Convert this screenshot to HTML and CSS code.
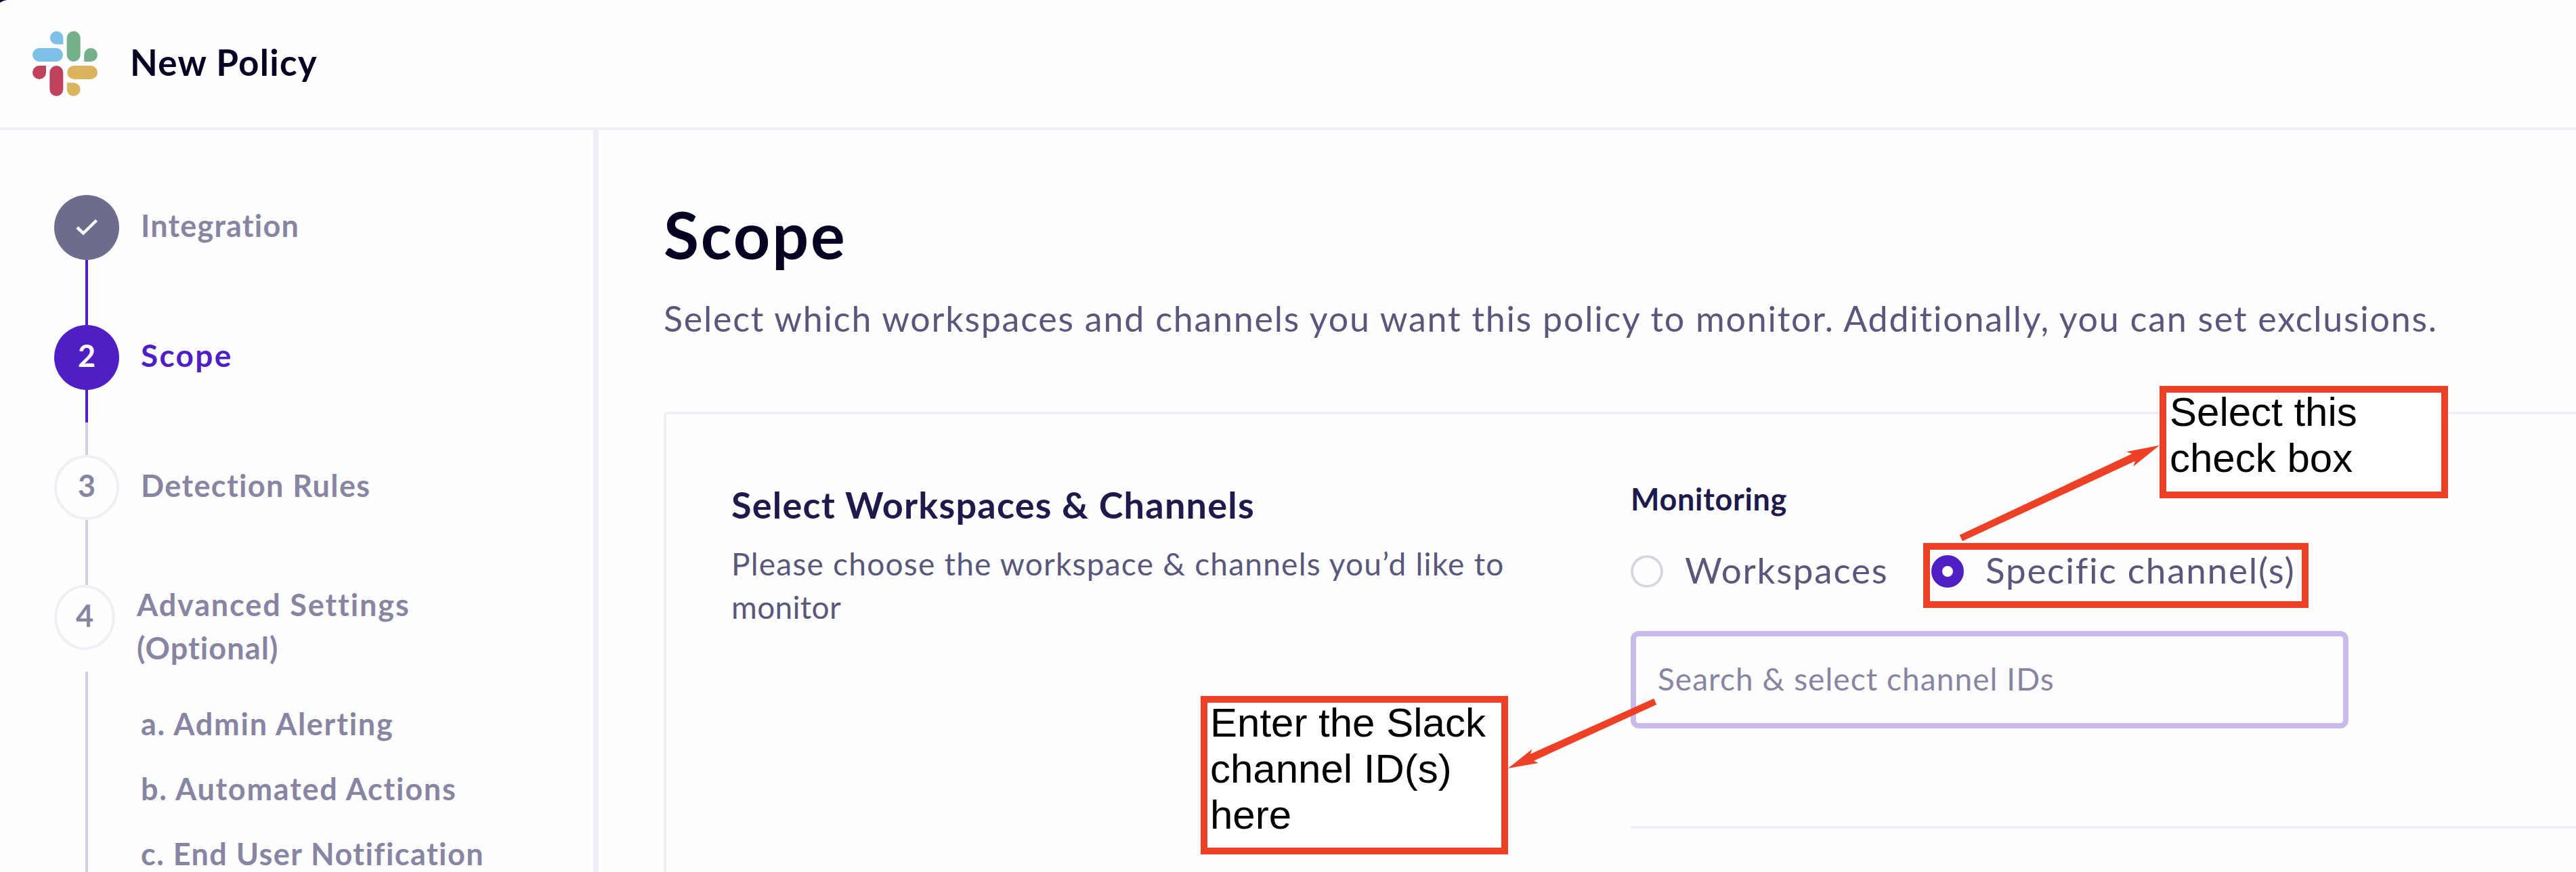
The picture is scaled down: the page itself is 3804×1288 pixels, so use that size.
FILE: index.html
```html
<!DOCTYPE html>
<html lang="en">
<head>
<meta charset="utf-8">
<title>New Policy</title>
<link rel="stylesheet" href="styles.css">
</head>
<body>
<div class="page">
  <header class="header">
    <svg class="logo" viewBox="0 0 96 96" aria-hidden="true">
      <g fill="#7cc0e8"><rect x="0" y="25" width="45" height="20" rx="10"/><path d="M45.3 19.4H35A9.7 9.7 0 1 1 45.3 9.7Z"/></g>
      <g fill="#73b087"><rect x="50.7" y="0" width="20" height="45" rx="10"/><path d="M76.2 45V35A9.9 10 0 1 1 86.1 45Z"/></g>
      <g fill="#dbb45e"><rect x="51.2" y="51" width="44.8" height="20" rx="10"/><path d="M50.8 76.2H60.8A9.9 9.9 0 1 1 50.8 86.2Z"/></g>
      <g fill="#bf435d"><rect x="25.3" y="51" width="20" height="45" rx="10"/><path d="M20 51V61A10 10 0 1 1 10 51Z"/></g>
    </svg>
    <div class="title">New Policy</div>
  </header>
  <div class="body">
    <nav class="sidebar">
      <div class="step">
        <div class="circle done"><svg viewBox="0 0 96 96"><path d="M34 48L43 56.5L62.5 37.5" fill="none" stroke="#fff" stroke-width="4.5"/></svg></div>
        <div class="label t-integration">Integration</div>
      </div>
      <div class="line active"></div>
      <div class="step">
        <div class="circle current"><span class="num">2</span></div>
        <div class="label t-scope">Scope</div>
      </div>
      <div class="line half"></div>
      <div class="step">
        <div class="circle"><span class="num">3</span></div>
        <div class="label t-rules">Detection Rules</div>
      </div>
      <div class="line"></div>
      <div class="step tall">
        <div class="circle narrow"><span class="num">4</span></div>
        <div class="label two"><span class="row t-adv">Advanced Settings</span><span class="row t-opt">(Optional)</span></div>
      </div>
      <div class="subs">
        <div class="line full"></div>
        <div class="sublist">
          <div class="sub">a. Admin Alerting</div>
          <div class="sub">b. Automated Actions</div>
          <div class="sub t-end">c. End User Notification</div>
        </div>
      </div>
    </nav>
    <main class="main">
      <h1 class="heading">Scope</h1>
      <p class="desc">Select which workspaces and channels you want this policy to monitor. Additionally, you can set exclusions.</p>
      <section class="card">
        <div class="intro">
          <h2 class="subhead">Select Workspaces &amp; Channels</h2>
          <p class="para">Please choose the workspace &amp; channels you’d like to <span class="t-mon">monitor</span></p>
        </div>
        <div class="form">
          <div class="field-label">Monitoring</div>
          <div class="radios">
            <div class="option"><span class="radio"></span><span class="opt-text">Workspaces</span></div>
            <div class="option"><span class="radio on"></span><span class="opt-text">Specific channel(s)</span></div>
          </div>
          <div class="input"><span class="ph">Search &amp; select channel IDs</span></div>
          <div class="divider"></div>
        </div>
      </section>
    </main>
  </div>
  <div class="frame"></div>
  <div class="note note-top">Select this<br>check box</div>
  <div class="note note-bottom">Enter the Slack<br>channel ID(s)<br>here</div>
  <svg class="marks" viewBox="0 0 3804 1288" aria-hidden="true">
    <path fill="#12043a" d="M0 0H10Q4 1 0 4Z"/>
    <g fill="#ec4126">
      <path d="M3189 657.7L3140.3 667.3L3148.3 670.3L2893.7 790.3L2898 799.3L3153 681L3150.3 689Z"/>
      <path d="M2226.7 1135L2262.3 1106.7L2260 1113.7L2442.3 1031.7L2446.3 1040.7L2265 1123.7L2271.7 1127Z"/>
    </g>
  </svg>
</div>
</body>
</html>
```
FILE: styles.css
```css
* { box-sizing: border-box; }
body { margin: 0; background: #fefefe; font-family: "Lato", "Open Sans", sans-serif; color: #030021; }
h1, h2, p { margin: 0; }
.page { position: relative; width: 3804px; height: 1288px; overflow: hidden; display: flex; flex-direction: column; }
.header { flex: none; height: 192px; border-bottom: 4px solid #f0eff5; padding-left: 48px; display: flex; align-items: center; gap: 48px; }
.logo { width: 96px; height: 96px; }
.title { font-size: 53px; font-weight: 700; letter-spacing: 1.25px; padding-bottom: 5px; }
.body { flex: 1; min-height: 0; display: flex; }
.sidebar { flex: none; width: 884px; border-right: 8px solid #f0eff5; padding: 96px 0 0 80px; display: flex; flex-direction: column; font-size: 45px; font-weight: 700; color: #8885a3; }
.step { flex: none; height: 96px; display: flex; align-items: center; gap: 32px; }
.circle { flex: none; width: 96px; height: 96px; border: 4px solid #f0eff5; border-radius: 50%; display: flex; align-items: center; justify-content: center; }
.circle.narrow { width: 90px; }
.circle.done { background: #6c6c8c; border: 0; }
.circle.done svg { width: 96px; height: 96px; }
.circle.current { background: #4f1ec4; border: 0; color: #fff; }
.num { padding-bottom: 6px; }
.label { padding-bottom: 6px; line-height: 64px; white-space: nowrap; }
.t-integration { letter-spacing: 1.2px; }
.t-scope { font-size: 46px; letter-spacing: 2.3px; color: #4f1ec4; }
.t-rules { letter-spacing: 1.38px; }
.step.tall { align-items: flex-start; }
.label.two { padding: 0; margin-top: -3px; }
.row { display: block; }
.t-adv { letter-spacing: 1.87px; }
.t-opt { letter-spacing: 1.1px; }
.line { flex: none; width: 4px; height: 96px; margin-left: 46px; background: #d4d2e0; }
.line.active { background: #4f1ec4; }
.line.half { background: linear-gradient(#4f1ec4 50%, #d4d2e0 50%); }
.subs { flex: 1; min-height: 0; margin-top: 32px; display: flex; gap: 78px; }
.line.full { height: auto; }
.sublist { padding-top: 29px; line-height: 96px; }
.sub { letter-spacing: 1.75px; white-space: nowrap; }
.t-end { letter-spacing: 1.45px; }
.main { flex: 1; min-width: 0; padding: 106px 0 0 96px; display: flex; flex-direction: column; }
.heading { font-size: 95px; line-height: 96px; font-weight: 700; letter-spacing: 2.9px; }
.desc { margin-top: 40px; font-size: 52px; line-height: 72px; letter-spacing: 1.75px; color: #5a577d; white-space: nowrap; }
.card { flex: 1; margin-top: 102px; border: solid #f0eff5; border-width: 4px 0 0 4px; border-top-left-radius: 6px; padding-left: 96px; display: flex; }
.intro { flex: none; width: 1328px; padding: 102px 120px 0 0; }
.subhead { font-size: 54px; line-height: 64px; font-weight: 700; letter-spacing: 1.22px; color: #1e1a4b; }
.para { margin-top: 23px; font-size: 46px; line-height: 64px; letter-spacing: 1.23px; color: #5a577d; }
.t-mon { letter-spacing: 0.3px; }
.form { flex: 1; padding-top: 93px; }
.field-label { font-size: 45px; line-height: 64px; font-weight: 700; letter-spacing: 0.68px; color: #1e1a4b; }
.radios { margin-top: 51px; height: 48px; display: grid; grid-template-columns: 444px auto; }
.option { display: flex; align-items: center; gap: 32px; }
.radio { flex: none; width: 48px; height: 48px; border: 4px solid #d8d6e2; border-radius: 50%; }
.radio.on { border: 16px solid #4f1ec4; }
.opt-text { padding-bottom: 5px; font-size: 53px; line-height: 42px; letter-spacing: 1.75px; color: #5a577d; white-space: nowrap; }
.input { margin-top: 64px; width: 1060px; height: 144px; border: 8px solid #c8bae9; border-radius: 12px; padding-left: 32px; display: flex; align-items: center; }
.ph { padding-bottom: 4px; font-size: 46px; letter-spacing: 1.05px; color: #8885a3; }
.divider { margin-top: 144px; height: 4px; background: #f0eff5; }
/* Callouts drawn over the form */
.frame, .note { position: absolute; outline: 10px solid #ec4126; outline-offset: -10px; }
.frame { left: 2840px; top: 802px; width: 569px; height: 96px; }
.note { background: #fff; color: #000; font: 60px/68px "Liberation Sans", Arial, sans-serif; white-space: nowrap; }
.note-top { left: 3189px; top: 570px; width: 426px; height: 166px; padding: 5px 15px; }
.note-bottom { left: 1773px; top: 1028px; width: 454px; height: 234px; padding: 6px 14px; }
.marks { position: absolute; left: 0; top: 0; width: 3804px; height: 1288px; }
```
